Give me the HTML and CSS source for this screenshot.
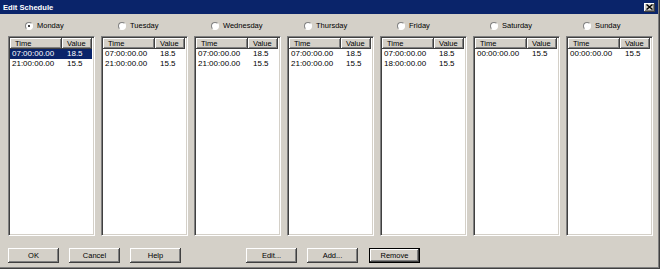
FILE: index.html
```html
<!DOCTYPE html>
<html>
<head>
<meta charset="utf-8">
<link rel="stylesheet" href="styles.css">
</head>
<body>
<div class="window">
  <div class="titlebar">
    <span class="title">Edit Schedule</span>
    <span class="close"><svg width="7" height="6" viewBox="0 0 7 6"><path d="M0.5 0.5 L6.5 5.5 M6.5 0.5 L0.5 5.5" stroke="#000" stroke-width="1.4"/></svg></span>
  </div>
  <div class="days">
    <div class="day">
      <div class="radio"><span class="circle checked"></span><span>Monday</span></div>
      <div class="list">
        <div class="header"><span class="h-time">Time</span><span class="h-value">Value</span><span class="h-fill"></span></div>
        <div class="row selected"><span class="c-time">07:00:00.00</span><span class="c-value">18.5</span></div>
        <div class="row"><span class="c-time">21:00:00.00</span><span class="c-value">15.5</span></div>
      </div>
    </div>
    <div class="day">
      <div class="radio"><span class="circle"></span><span>Tuesday</span></div>
      <div class="list">
        <div class="header"><span class="h-time">Time</span><span class="h-value">Value</span><span class="h-fill"></span></div>
        <div class="row"><span class="c-time">07:00:00.00</span><span class="c-value">18.5</span></div>
        <div class="row"><span class="c-time">21:00:00.00</span><span class="c-value">15.5</span></div>
      </div>
    </div>
    <div class="day">
      <div class="radio"><span class="circle"></span><span>Wednesday</span></div>
      <div class="list">
        <div class="header"><span class="h-time">Time</span><span class="h-value">Value</span><span class="h-fill"></span></div>
        <div class="row"><span class="c-time">07:00:00.00</span><span class="c-value">18.5</span></div>
        <div class="row"><span class="c-time">21:00:00.00</span><span class="c-value">15.5</span></div>
      </div>
    </div>
    <div class="day">
      <div class="radio"><span class="circle"></span><span>Thursday</span></div>
      <div class="list">
        <div class="header"><span class="h-time">Time</span><span class="h-value">Value</span><span class="h-fill"></span></div>
        <div class="row"><span class="c-time">07:00:00.00</span><span class="c-value">18.5</span></div>
        <div class="row"><span class="c-time">21:00:00.00</span><span class="c-value">15.5</span></div>
      </div>
    </div>
    <div class="day">
      <div class="radio"><span class="circle"></span><span>Friday</span></div>
      <div class="list">
        <div class="header"><span class="h-time">Time</span><span class="h-value">Value</span><span class="h-fill"></span></div>
        <div class="row"><span class="c-time">07:00:00.00</span><span class="c-value">18.5</span></div>
        <div class="row"><span class="c-time">18:00:00.00</span><span class="c-value">15.5</span></div>
      </div>
    </div>
    <div class="day">
      <div class="radio"><span class="circle"></span><span>Saturday</span></div>
      <div class="list">
        <div class="header"><span class="h-time">Time</span><span class="h-value">Value</span><span class="h-fill"></span></div>
        <div class="row"><span class="c-time">00:00:00.00</span><span class="c-value">15.5</span></div>
      </div>
    </div>
    <div class="day">
      <div class="radio"><span class="circle"></span><span>Sunday</span></div>
      <div class="list">
        <div class="header"><span class="h-time">Time</span><span class="h-value">Value</span><span class="h-fill"></span></div>
        <div class="row"><span class="c-time">00:00:00.00</span><span class="c-value">15.5</span></div>
      </div>
    </div>
  </div>
  <div class="buttons">
    <button class="btn">OK</button>
    <button class="btn">Cancel</button>
    <button class="btn">Help</button>
    <button class="btn sep">Edit...</button>
    <button class="btn">Add...</button>
    <button class="btn default">Remove</button>
  </div>
</div>
</body>
</html>
```
FILE: styles.css
```css
html, body {
  margin: 0;
  padding: 0;
  background: #d4d0c8;
}
.window {
  width: 660px;
  height: 269px;
  box-sizing: border-box;
  background: #d4d0c8;
  border-right: 1px solid #404040;
  border-bottom: 1px solid #404040;
  box-shadow: inset -1px -1px 0 #808080;
  display: flex;
  flex-direction: column;
  font-family: "Liberation Sans", Arial, sans-serif;
  font-size: 7.5px;
  color: #000;
}
.titlebar {
  height: 14px;
  background: #0a246a;
  display: flex;
  align-items: center;
  justify-content: space-between;
  padding: 0 3px 0 3px;
  margin-right: 1px;
}
.title {
  color: #fff;
  font-weight: bold;
  font-size: 7.6px;
}
.close {
  width: 11px;
  height: 9px;
  box-sizing: border-box;
  background: #d4d0c8;
  box-shadow: inset -1px -1px 0 #404040, inset 1px 1px 0 #fff, inset -2px -2px 0 #808080;
  display: flex;
  align-items: center;
  justify-content: center;
}
.close svg { display: block; }
.days {
  display: grid;
  grid-template-columns: repeat(7, 87px);
  column-gap: 6px;
  padding-left: 8px;
  margin-top: 1px;
}
.day {
  display: flex;
  flex-direction: column;
}
.radio {
  height: 21px;
  display: flex;
  align-items: center;
  gap: 4px;
  padding-left: 17px;
}
.circle {
  width: 8px;
  height: 8px;
  box-sizing: border-box;
  border-radius: 50%;
  background: #fff;
  border: 1px solid;
  border-color: #808080 #fff #fff #808080;
  display: flex;
  align-items: center;
  justify-content: center;
}
.circle.checked::after {
  content: "";
  width: 2px;
  height: 2px;
  border-radius: 50%;
  background: #000;
}
.list {
  height: 200px;
  box-sizing: border-box;
  background: #fff;
  border: 1px solid;
  border-color: #808080 #fff #fff #808080;
  box-shadow: inset 1px 1px 0 #404040, inset -1px -1px 0 #d4d0c8;
  padding: 1px 2px 1px 1px;
}
.header {
  height: 11px;
  display: flex;
  background: #d4d0c8;
}
.header span {
  box-sizing: border-box;
  line-height: 11px;
  padding-left: 5px;
  box-shadow: inset -1px -1px 0 #404040, inset 1px 1px 0 #fff, inset -2px -2px 0 #808080;
}
.h-time { width: 52px; }
.h-value { width: 30px; }
.header .h-fill { flex: 1; box-shadow: none; padding: 0; }
.row {
  height: 10px;
  line-height: 10px;
  display: flex;
  font-size: 8px;
}
.row.selected {
  background: #0a246a;
  color: #fff;
}
.c-time { width: 52px; padding-left: 2px; box-sizing: border-box; }
.c-value { padding-left: 5px; }
.buttons {
  display: flex;
  gap: 10px;
  padding-left: 8px;
  margin-top: 12px;
}
.btn {
  width: 51px;
  height: 15px;
  box-sizing: border-box;
  margin: 0;
  padding: 0;
  border: none;
  background: #d4d0c8;
  font-family: "Liberation Sans", Arial, sans-serif;
  font-size: 7.5px;
  color: #000;
  box-shadow: inset -1px -1px 0 #404040, inset 1px 1px 0 #fff, inset -2px -2px 0 #808080;
}
.btn.sep { margin-left: 55px; }
.btn.default {
  margin-left: 1px;
  border: 1px solid #000;
  box-shadow: inset -1px -1px 0 #404040, inset 1px 1px 0 #fff, inset -2px -2px 0 #808080;
}
```
